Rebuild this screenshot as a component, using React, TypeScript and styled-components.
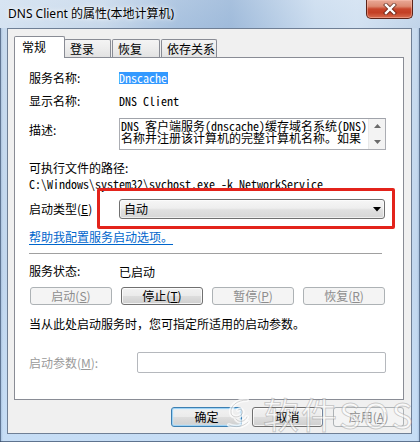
import React from "react";
import styled, { createGlobalStyle } from "styled-components";

const UI = `"Noto Sans CJK SC", "Noto Sans", sans-serif`;
const MONO = `"Noto Sans Mono CJK SC", "Liberation Mono", "Noto Sans CJK SC", monospace`;

const Global = createGlobalStyle`
  html, body { margin: 0; padding: 0; }
  body { width: 420px; height: 442px; overflow: hidden; background: #fff; font-family: ${UI}; }
  * { box-sizing: border-box; }
`;

const Window = styled.div`
  position: relative;
  width: 420px;
  height: 442px;
  display: flex;
  flex-direction: column;
  padding: 0 8px 8px 7px;
  background:
    linear-gradient(90deg, rgba(90,125,170,0.35) 0px, rgba(90,125,170,0) 3px, rgba(90,125,170,0) 417px, rgba(90,125,170,0.35) 420px),
    linear-gradient(180deg, #c9dbee 0%, #c2d7ee 60%, #c6ddf5 100%);
  box-shadow: inset 0 -1px 0 rgba(50,70,100,0.7), inset 1px 0 0 rgba(50,70,100,0.6), inset -1px 0 0 rgba(50,70,100,0.6);
`;

const TitleBar = styled.div`
  height: 28px;
  margin: 0 -8px 0 -7px;
  padding: 0 7px 0 8px;
  display: flex;
  align-items: flex-start;
  justify-content: space-between;
  background:
    linear-gradient(90deg, rgba(215,228,242,0.9) 0%, rgba(200,216,234,0.6) 25%, rgba(150,180,215,0.6) 42%, rgba(140,172,210,0.65) 55%, rgba(205,222,240,0.7) 75%, rgba(214,228,243,0.8) 85%, rgba(190,210,232,0.6) 100%),
    linear-gradient(180deg, #dae6f3 0%, #c3d6ea 100%);
`;

const Title = styled.div`
  margin-top: 6px;
  font-family: "Noto Sans", "Noto Sans CJK SC", sans-serif;
  font-size: 12px;
  line-height: 16px;
  color: #000;
  text-shadow: 0 0 6px rgba(255,255,255,0.95), 0 0 3px rgba(255,255,255,0.9);
`;

const CloseButton = styled.div`
  width: 47px;
  height: 19px;
  display: flex;
  align-items: center;
  justify-content: center;
  border: 1px solid #5b2318;
  border-top: none;
  border-radius: 0 0 5px 5px;
  background: linear-gradient(180deg, #e9a997 0%, #dd8a72 35%, #c8462c 50%, #c33f24 70%, #d76d50 100%);
  box-shadow: inset 0 0 0 1px rgba(255,200,185,0.45);
`;

const Client = styled.div`
  flex: 1;
  display: flex;
  flex-direction: column;
  padding: 7px 7px 6px 6px;
  background: #f0f0f0;
  border: 1px solid #6f7f95;
  font-family: ${UI};
  font-size: 12px;
  color: #000;
`;

const TabStrip = styled.div`
  display: flex;
  align-items: flex-end;
  height: 22px;
  margin-bottom: -1px;
`;

const Tab = styled.div<{ $active?: boolean; $w: number; $gap?: number }>`
  position: relative;
  width: ${p => p.$w}px;
  height: ${p => (p.$active ? 22 : 19)}px;
  margin-left: ${p => p.$gap ?? 0}px;
  padding-left: ${p => (p.$active ? 7 : 5)}px;
  border: 1px solid #898c95;
  border-bottom: none;
  border-radius: 2px 2px 0 0;
  background: ${p => (p.$active ? "#fff" : "linear-gradient(180deg, #f4f4f4 0%, #ececec 50%, #e1e1e1 100%)")};
  z-index: ${p => (p.$active ? 2 : 0)};
  font-size: 12px;
  line-height: ${p => (p.$active ? 20 : 17)}px;
`;

const Panel = styled.div`
  position: relative;
  flex: 1;
  display: flex;
  flex-direction: column;
  padding: 0 17px 0 14px;
  background: #fff;
  border: 1px solid #898c95;
  z-index: 1;
`;

const Row = styled.div<{ $top: number; $h: number; $align?: string }>`
  position: relative;
  display: flex;
  align-items: ${p => p.$align ?? "center"};
  margin-top: ${p => p.$top}px;
  height: ${p => p.$h}px;
  flex: none;
`;

const Label = styled.div<{ $w?: number; $pad?: number; $dim?: boolean }>`
  width: ${p => p.$w ?? 90}px;
  flex: none;
  padding-top: ${p => p.$pad ?? 0}px;
  line-height: 20px;
  color: ${p => (p.$dim ? "#9a9a9a" : "#000")};
  white-space: nowrap;
`;

const Mono = styled.span`
  font-family: ${MONO};
  font-size: 12px;
  line-height: 12px;
  white-space: pre;
`;

const Selected = styled(Mono)`
  display: inline-block;
  padding: 0 1px 0 0;
  height: 12px;
  background: #3399ff;
  color: #fff;
`;

const TextBox = styled.div`
  position: relative;
  width: 267px;
  height: 32px;
  border: 1px solid #abadb3;
  border-top-color: #a0a3aa;
  background: #fff;
  padding: 1px 0 0 1px;
  display: flex;
  flex-direction: column;
  overflow: hidden;
`;

const TextLine = styled.div`
  font-family: ${MONO};
  font-size: 12px;
  line-height: 12px;
  height: 12px;
  white-space: pre;
  width: 248px;
`;

const ScrollBar = styled.div`
  position: absolute;
  top: 0;
  right: 0;
  bottom: 0;
  width: 17px;
  background: #f3f3f3;
  border-left: 1px solid #e8e8e8;
  display: flex;
  flex-direction: column;
  justify-content: space-between;
  align-items: center;
  padding: 5px 0 5px;
`;

const Line = styled.div<{ $top: number; $mono?: boolean }>`
  margin-top: ${p => p.$top}px;
  height: 16px;
  line-height: 16px;
  flex: none;
  white-space: pre;
  font-family: ${p => (p.$mono ? MONO : UI)};
  font-size: 12px;
`;

const Link = styled.a`
  color: #0066cc;
  text-decoration: underline;
  text-underline-offset: 2px;
  cursor: pointer;
`;

const Select = styled.div`
  width: 266px;
  height: 20px;
  border: 1px solid #707070;
  border-radius: 3px;
  background: linear-gradient(180deg, #f6f6f6 0%, #eeeeee 45%, #e0e0e0 55%, #d6d6d6 100%);
  box-shadow: inset 0 0 0 1px rgba(255,255,255,0.6);
  display: flex;
  align-items: center;
  justify-content: space-between;
  padding: 0 3px 0 4px;
  line-height: 18px;
`;

const Annotation = styled.div`
  position: absolute;
  left: 68px;
  top: -11px;
  width: 298px;
  height: 41px;
  border: 3px solid #e3231b;
  border-radius: 2px;
  pointer-events: none;
`;

const Separator = styled.div`
  margin-top: 8px;
  margin-right: 4px;
  height: 1px;
  flex: none;
  background: #a0a0a0;
  box-shadow: 0 1px 0 #fff;
`;

const ButtonGrid = styled.div`
  margin-top: 8px;
  margin-left: 1px;
  display: grid;
  grid-template-columns: repeat(4, 82px);
  column-gap: 9px;
  height: 18px;
  flex: none;
`;

const Button = styled.div<{ $disabled?: boolean; $default?: boolean }>`
  height: 100%;
  display: flex;
  align-items: center;
  justify-content: center;
  font-size: 12px;
  line-height: 16px;
  border-radius: 3px;
  white-space: nowrap;
  color: ${p => (p.$disabled ? "#8d8d8d" : "#000")};
  border: 1px solid ${p => (p.$disabled ? "#adb2b5" : p.$default ? "#3c7fb1" : "#707070")};
  background: ${p =>
    p.$disabled
      ? "#f4f4f4"
      : "linear-gradient(180deg, #f2f2f2 0%, #ebebeb 48%, #dddddd 52%, #cfcfcf 100%)"};
  box-shadow: ${p =>
    p.$disabled
      ? "none"
      : p.$default
      ? "inset 0 0 0 1px #9ed3f6, inset 0 0 2px 1px #c8e8fb"
      : "inset 0 0 0 1px rgba(255,255,255,0.75)"};
`;

const Input = styled.div`
  width: 249px;
  height: 21px;
  border: 1px solid #b5b8bd;
  border-radius: 2px;
  background: #fff;
`;

const BottomBar = styled.div`
  margin-top: 7px;
  height: 20px;
  display: flex;
  justify-content: flex-end;
  gap: 10px;
  flex: none;
`;

const BottomButton = styled(Button)`
  width: 71px;
`;

const Watermark = styled.div`
  position: absolute;
  left: 227px;
  top: 393px;
  display: flex;
  align-items: center;
  gap: 12px;
  pointer-events: none;
  z-index: 5;
`;

const WatermarkText = styled.span`
  font-family: "Noto Sans CJK SC", sans-serif;
  font-size: 36px;
  line-height: 40px;
  font-weight: 400;
  letter-spacing: 2px;
  color: rgba(255,255,255,0.6);
  -webkit-text-stroke: 1px rgba(110,110,110,0.32);
`;

const Acc = styled.u`
  text-decoration: underline;
  text-underline-offset: 1px;
`;

export default function App() {
  return (
    <>
      <Global />
      <Window>
        <TitleBar>
          <Title>DNS Client 的属性(本地计算机)</Title>
          <CloseButton>
            <svg width="14" height="12" viewBox="0 0 14 12">
              <path d="M3 2 L11 10 M11 2 L3 10" stroke="#3a1610" strokeWidth="4.2" strokeLinecap="square" fill="none" opacity="0.6" />
              <path d="M3 2 L11 10 M11 2 L3 10" stroke="#fff" strokeWidth="2.4" strokeLinecap="square" fill="none" />
            </svg>
          </CloseButton>
        </TitleBar>
        <Client>
          <TabStrip>
            <Tab $active $w={51}>常规</Tab>
            <Tab $w={47} $gap={-1}>登录</Tab>
            <Tab $w={48} $gap={1}>恢复</Tab>
            <Tab $w={56} $gap={1}>依存关系</Tab>
          </TabStrip>
          <Panel>
            <Row $top={10} $h={20}>
              <Label>服务名称:</Label>
              <Selected>Dnscache</Selected>
            </Row>
            <Row $top={3} $h={20}>
              <Label>显示名称:</Label>
              <Mono>DNS Client</Mono>
            </Row>
            <Row $top={7} $h={32} $align="flex-start">
              <Label $pad={2}>描述:</Label>
              <TextBox>
                <TextLine>DNS 客户端服务(dnscache)缓存域名系统(DNS)</TextLine>
                <TextLine>名称并注册该计算机的完整计算机名称。如果</TextLine>
                <ScrollBar>
                  <svg width="7" height="4" viewBox="0 0 7 4"><path d="M0 4 L3.5 0 L7 4 Z" fill="#6a6a6a" /></svg>
                  <svg width="7" height="4" viewBox="0 0 7 4"><path d="M0 0 L7 0 L3.5 4 Z" fill="#6a6a6a" /></svg>
                </ScrollBar>
              </TextBox>
            </Row>
            <Line $top={10}>可执行文件的路径:</Line>
            <Line $top={0} $mono>C:\Windows\system32\svchost.exe -k NetworkService</Line>
            <Row $top={7} $h={20}>
              <Label>启动类型(<Acc>E</Acc>)</Label>
              <Select>
                <span>自动</span>
                <svg width="8" height="5" viewBox="0 0 8 5"><path d="M0 0 L8 0 L4 4.5 Z" fill="#000" /></svg>
              </Select>
              <Annotation />
            </Row>
            <Line $top={10}>
              <Link>帮助我配置服务启动选项。</Link>
            </Line>
            <Separator />
            <Row $top={9} $h={16}>
              <Label>服务状态:</Label>
              <span>已启动</span>
            </Row>
            <ButtonGrid>
              <Button $disabled>启动(<Acc>S</Acc>)</Button>
              <Button>停止(<Acc>T</Acc>)</Button>
              <Button $disabled>暂停(<Acc>P</Acc>)</Button>
              <Button $disabled>恢复(<Acc>R</Acc>)</Button>
            </ButtonGrid>
            <Line $top={11}>当从此处启动服务时，您可指定所适用的启动参数。</Line>
            <Row $top={20} $h={21}>
              <Label $w={108} $dim>启动参数(<Acc>M</Acc>):</Label>
              <Input />
            </Row>
          </Panel>
          <BottomBar>
            <BottomButton $default>确定</BottomButton>
            <BottomButton>取消</BottomButton>
            <BottomButton $disabled>应用(<Acc>A</Acc>)</BottomButton>
          </BottomBar>
        </Client>
        <Watermark>
          <svg width="24" height="32" viewBox="0 0 24 32">
            <path
              d="M20 3 C10 3 3 9 4 16 C5 21 12 21 15 17 C17 14 14 11 11 13 M9 22 C12 26 18 25 20 20 M2 28 C8 31 16 30 21 25"
              stroke="rgba(255,255,255,0.7)"
              strokeWidth="4"
              fill="none"
              strokeLinecap="round"
            />
            <path
              d="M20 3 C10 3 3 9 4 16 C5 21 12 21 15 17 C17 14 14 11 11 13 M9 22 C12 26 18 25 20 20 M2 28 C8 31 16 30 21 25"
              stroke="rgba(120,120,120,0.3)"
              strokeWidth="1"
              fill="none"
              strokeLinecap="round"
            />
          </svg>
          <WatermarkText>软件SOS</WatermarkText>
        </Watermark>
      </Window>
    </>
  );
}
